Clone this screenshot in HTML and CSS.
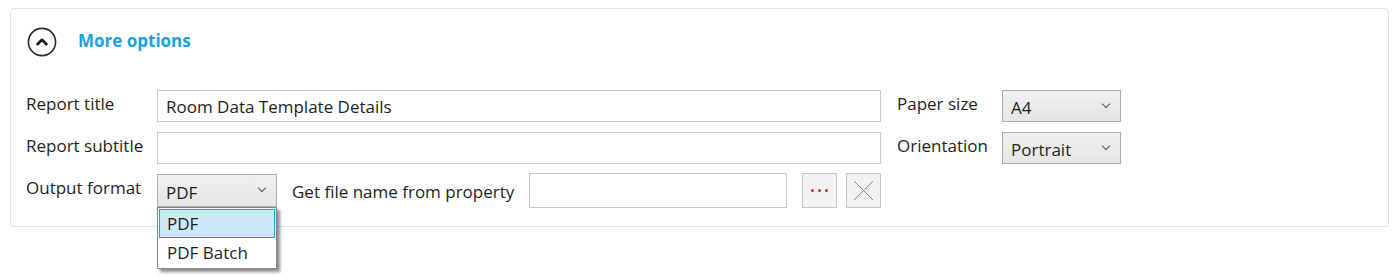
FILE: index.html
```html
<!DOCTYPE html>
<html>
<head>
<meta charset="utf-8">
<link rel="stylesheet" href="styles.css">
</head>
<body>
<div class="panel">
  <div class="header">
    <span class="toggle">
      <svg width="30" height="30" viewBox="0 0 30 30"><circle cx="15" cy="15" r="13.6" fill="none" stroke="#2b2b2b" stroke-width="1.6"/><path d="M10.5 17.2 L15 12.8 L19.5 17.2" fill="none" stroke="#1a1a1a" stroke-width="2.6" stroke-linecap="round" stroke-linejoin="round"/></svg>
    </span>
    <span class="more">More options</span>
  </div>
  <div class="form">
    <label class="lbl">Report title</label>
    <div class="input">Room Data Template Details</div>
    <label class="lbl lbl2">Paper size</label>
    <div class="select wide"><span>A4</span><i class="chev"></i></div>

    <label class="lbl">Report subtitle</label>
    <div class="input"></div>
    <label class="lbl lbl2">Orientation</label>
    <div class="select wide"><span>Portrait</span><i class="chev"></i></div>

    <label class="lbl">Output format</label>
    <div class="row3">
      <div class="combo">
        <div class="select narrow open"><span>PDF</span><i class="chev"></i></div>
        <div class="list">
          <div class="item sel">PDF</div>
          <div class="item">PDF Batch</div>
        </div>
      </div>
      <label class="lbl fromprop">Get file name from property</label>
      <div class="input file"></div>
      <div class="btn dots"><i></i><i></i><i></i></div>
      <div class="btn clear"><svg width="21" height="21" viewBox="0 0 21 21"><path d="M1 1 L20 20 M20 1 L1 20" stroke="#8a8a8a" stroke-width="1"/></svg></div>
    </div>
  </div>
</div>
</body>
</html>
```
FILE: styles.css
```css
html, body { margin: 0; padding: 0; background: #ffffff; }
body {
  font-family: "Open Sans", "Noto Sans", sans-serif;
  font-size: 17px;
  color: #1e1e1e;
  padding: 8px 6px 0 10px;
  height: 279px;
  box-sizing: border-box;
}
.panel {
  width: 1377px;
  height: 217px;
  border: 1px solid #e3e3e3;
  border-radius: 4px;
  box-sizing: content-box;
}
.header {
  display: flex;
  align-items: center;
  height: 63px;
  padding-left: 16px;
  padding-top: 2px;
  box-sizing: border-box;
}
.toggle { display: flex; width: 30px; height: 30px; }
.more {
  margin-left: 21px;
  color: #1ba1e2;
  font-weight: 700;
  font-size: 17px;
  margin-top: -2px;
}
.form {
  display: grid;
  grid-template-columns: 131px 724px 121px 119px;
  row-gap: 10px;
  grid-auto-rows: 32px;
  padding: 18px 0 0 15px;
}
.lbl {
  display: flex;
  align-items: center;
  height: 100%;
  margin-top: -3px;
  white-space: nowrap;
}
.lbl2 { padding-left: 16px; }
.input {
  border: 1px solid #c9c9c9;
  background: #fff;
  box-sizing: border-box;
  height: 32px;
  padding: 0 8px;
  display: flex;
  align-items: center;
  padding-top: 1px;
}
.select {
  border: 1px solid #acacac;
  background: linear-gradient(#f0f0f0, #e5e5e5);
  box-sizing: border-box;
  height: 32px;
  display: flex;
  align-items: center;
  justify-content: space-between;
  padding: 3px 11px 0 8px;
}
.chev {
  width: 5px; height: 5px;
  border-right: 1.3px solid #555;
  border-bottom: 1.3px solid #555;
  transform: rotate(45deg);
  margin-top: -8px;
}
.row3 {
  display: flex;
  align-items: flex-start;
  height: 33px;
}
.combo { position: relative; width: 120px; flex: none; }
.select.narrow { height: 33px; }
.list {
  position: absolute;
  left: 0; top: 33px;
  width: 120px;
  box-sizing: border-box;
  border: 1px solid #828790;
  background: #fff;
  box-shadow: 3px 3px 3px rgba(0,0,0,0.45);
  padding: 1px;
  z-index: 2;
}
.item {
  height: 29px;
  display: flex;
  align-items: center;
  padding-left: 7px;
  box-sizing: border-box;
  border: 1px solid transparent;
}
.item.sel { background: #cde8f7; border-color: #26a0da; }
.fromprop { margin-left: 15px; margin-top: 0; height: 35px; width: 237px; flex: none; }
.input.file { width: 258px; height: 35px; flex: none; margin-top: -1px; }
.btn {
  width: 35px; height: 35px;
  box-sizing: border-box;
  border: 1px solid #c4c4c4;
  background: #f2f2f2;
  display: flex;
  align-items: center;
  justify-content: center;
  flex: none;
  margin-top: -1px;
}
.dots { margin-left: 15px; gap: 4px; }
.dots i { width: 3px; height: 3px; background: #b03a2e; border-radius: 50%; display: block; }
.clear { margin-left: 9px; }
```
